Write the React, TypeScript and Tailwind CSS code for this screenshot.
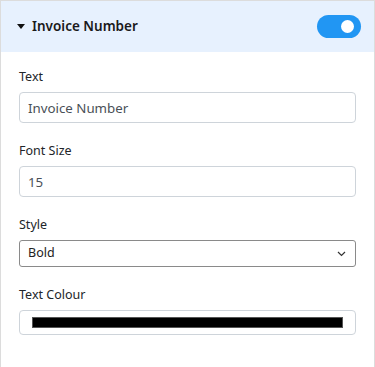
import React, { useState } from 'react';

const font = { fontFamily: '"Noto Sans", "Open Sans", sans-serif' };

const Field: React.FC<{ label: string; children: React.ReactNode; className?: string }> = ({ label, children, className }) => (
  <div className={className}>
    <label className="block text-[12.5px] leading-[21px] text-[#212529] mb-[5px]">{label}</label>
    {children}
  </div>
);

export default function App() {
  const [enabled, setEnabled] = useState(true);
  const [text, setText] = useState('Invoice Number');
  const [size, setSize] = useState('15');

  return (
    <div className="w-[375px] h-[367px] bg-white border border-[#dcdcdc] border-b-0 text-[#212529]" style={font}>
      <div className="h-[51px] bg-[#e7f1fe] flex items-center justify-between pl-[16px] pr-[13px]">
        <div className="flex items-center gap-[7px]">
          <svg width="8" height="5" viewBox="0 0 8 5" className="mt-[-1px]">
            <path d="M0 0 H8 L4 5 Z" fill="#111" />
          </svg>
          <span className="text-[13.5px] font-semibold text-[#1a1a1a]">Invoice Number</span>
        </div>
        <button
          onClick={() => setEnabled(!enabled)}
          className={`w-[44px] h-[23px] rounded-full flex items-center px-[4px] ${enabled ? 'bg-[#2196f3] justify-end' : 'bg-[#ccc] justify-start'}`}
        >
          <span className="w-[13px] h-[13px] rounded-full bg-white mr-[3px]" />
        </button>
      </div>

      <div className="px-[18px] pt-[14px]">
        <Field label="Text" className="mb-[17px]">
          <input
            value={text}
            onChange={(e) => setText(e.target.value)}
            className="w-[337px] h-[31px] px-[8px] text-[13.3px] text-[#495057] border border-[#ced4da] rounded-[4px] outline-none"
          />
        </Field>
        <Field label="Font Size" className="mb-[17px]">
          <input
            value={size}
            onChange={(e) => setSize(e.target.value)}
            className="w-[337px] h-[31px] px-[8px] text-[13.3px] text-[#495057] border border-[#ced4da] rounded-[4px] outline-none"
          />
        </Field>
        <Field label="Style" className="mb-[17px]">
          <div className="w-[337px] h-[27px] border border-[#8a8a8a] rounded-[3px] flex items-center justify-between pl-[8px] pr-[9px]">
            <span className="text-[12.5px] text-[#222]">Bold</span>
            <svg width="9" height="6" viewBox="0 0 9 6">
              <path d="M1 1 L4.5 4.5 L8 1" fill="none" stroke="#333" strokeWidth="1.2" />
            </svg>
          </div>
        </Field>
        <Field label="Text Colour">
          <div className="w-[337px] h-[25px] border border-[#ced4da] rounded-[4px] pl-[12px] pr-[12px] pt-[6px]">
            <div className="h-[11px] bg-black border border-[#555]" />
          </div>
        </Field>
      </div>
    </div>
  );
}
